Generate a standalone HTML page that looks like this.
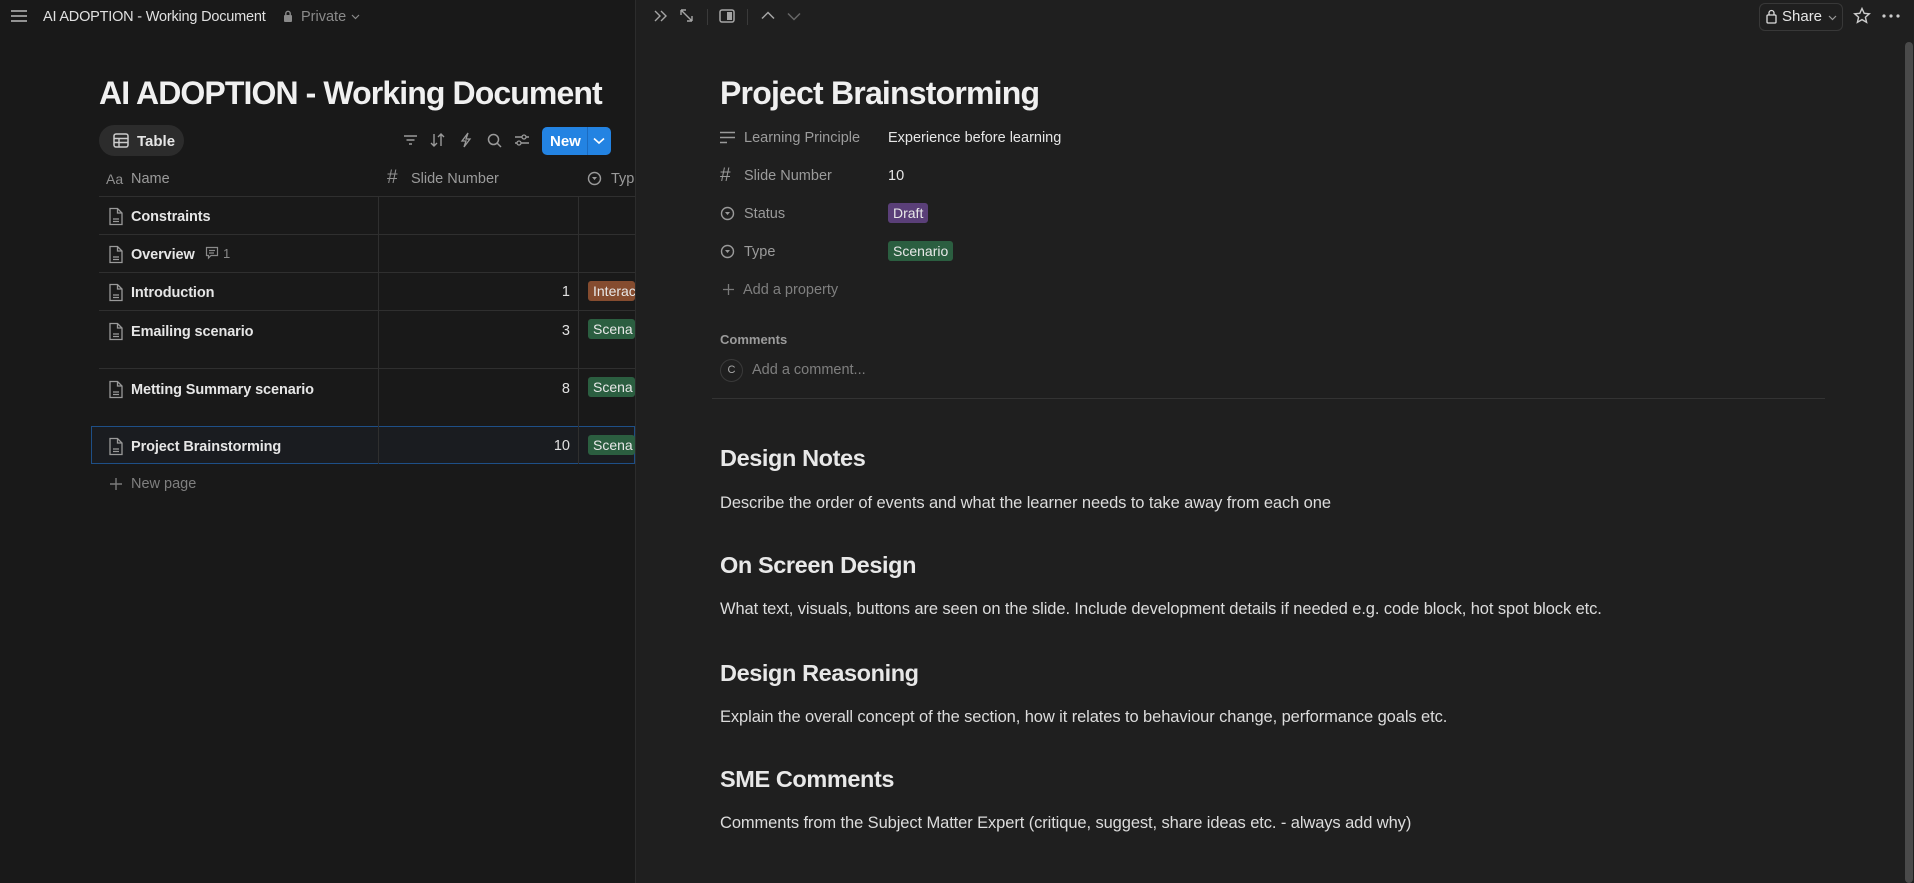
<!DOCTYPE html>
<html><head><meta charset="utf-8">
<style>
*{margin:0;padding:0;box-sizing:border-box}
body{width:1914px;height:883px;overflow:hidden;background:#191919;font-family:"Liberation Sans",sans-serif;color:#d4d4d4;position:relative}
.a{position:absolute;white-space:nowrap}
#left{position:absolute;left:0;top:0;width:635px;height:883px;background:#191919;overflow:hidden}
#right{position:absolute;left:635px;top:0;width:1279px;height:883px;background:#1f1f1f;border-left:1px solid #2c2c2c}
.nm{position:absolute;left:131px;font-size:14.5px;font-weight:bold;color:#e6e6e6;letter-spacing:-0.1px}
.num{position:absolute;font-size:14.5px;color:#e0e0e0;text-align:right;width:40px;left:530px}
.tag{position:absolute;left:588px;height:20px;border-radius:3px;font-size:14px;color:#e8e8e8;padding:2px 5px;overflow:hidden}
.vl{position:absolute;width:1px;background:#2f2f2f}
.doc{position:absolute;left:108px}
.lab{position:absolute;left:743px;font-size:14.5px;color:#9b9b9b}
.val{position:absolute;left:887px;font-size:14.5px;color:#e6e6e6}
h2{position:absolute;left:719px;font-size:23.5px;font-weight:bold;color:#e8e8e8;letter-spacing:-0.4px;white-space:nowrap}
.p{position:absolute;left:719px;font-size:16.5px;color:#dcdcdc;white-space:nowrap;letter-spacing:-0.1px}
</style></head><body>
<div id="left">
<svg class="a" style="left:10px;top:9px" width="18" height="14" viewBox="0 0 18 14"><path d="M1 2H17M1 7H17M1 12H17" stroke="#bbb" stroke-width="1.6"/></svg>
<div class="a" style="left:43px;top:9px;font-size:14.5px;color:#e0e0e0;letter-spacing:-0.2px">AI ADOPTION - Working Document</div>
<svg class="a" style="left:283px;top:10px" width="10" height="13" viewBox="0 0 10 13"><rect x="1" y="5" width="8" height="7" rx="1" fill="#8a8a8a"/><path d="M2.8 5V3.5a2.2 2.2 0 0 1 4.4 0V5" stroke="#8a8a8a" stroke-width="1.4" fill="none"/></svg>
<div class="a" style="left:301px;top:9px;font-size:14.5px;color:#8a8a8a">Private</div>
<svg class="a" style="left:351px;top:14px" width="9" height="6"><path d="M1 1L4.5 4.5L8 1" stroke="#8a8a8a" fill="none" stroke-width="1.2"/></svg>

<div class="a" style="left:99px;top:75px;font-size:32px;font-weight:bold;color:#f0f0f0;letter-spacing:-0.9px">AI ADOPTION - Working Document</div>

<div class="a" style="left:99px;top:125px;width:85px;height:31px;border-radius:16px;background:#2c2c2c"></div>
<svg class="a" style="left:113px;top:133px" width="16" height="15" viewBox="0 0 16 15"><rect x="1" y="1" width="14" height="13" rx="2" stroke="#ccc" stroke-width="1.5" fill="none"/><path d="M1 5.5H15M1 9.5H15M6 5.5V14" stroke="#ccc" stroke-width="1.4"/></svg>
<div class="a" style="left:137px;top:133px;font-size:15px;color:#e6e6e6;font-weight:bold">Table</div>

<svg class="a" style="left:403px;top:133px" width="15" height="14"><path d="M1 3H14M3.5 7H11.5M6 11H9" stroke="#9a9a9a" stroke-width="1.5"/></svg>
<svg class="a" style="left:430px;top:132px" width="15" height="16"><path d="M4 2V14M1 11L4 14L7 11M11 14V2M8 5L11 2L14 5" stroke="#9a9a9a" stroke-width="1.4" fill="none"/></svg>
<svg class="a" style="left:460px;top:132px" width="12" height="16"><path d="M8 1L2 9H6L4 15L10 7H6Z" stroke="#9a9a9a" stroke-width="1.3" fill="none"/></svg>
<svg class="a" style="left:487px;top:133px" width="15" height="15"><circle cx="6.5" cy="6.5" r="5" stroke="#9a9a9a" stroke-width="1.5" fill="none"/><path d="M10 10L14 14" stroke="#9a9a9a" stroke-width="1.5"/></svg>
<svg class="a" style="left:514px;top:133px" width="16" height="14"><path d="M1 4H15M1 10H15" stroke="#9a9a9a" stroke-width="1.4"/><circle cx="10" cy="4" r="2" fill="#191919" stroke="#9a9a9a" stroke-width="1.3"/><circle cx="5" cy="10" r="2" fill="#191919" stroke="#9a9a9a" stroke-width="1.3"/></svg>
<div class="a" style="left:542px;top:127px;width:69px;height:28px;border-radius:5px;background:#2383e2"></div>
<div class="a" style="left:587px;top:127px;width:1px;height:28px;background:#1b6bc0"></div>
<div class="a" style="left:550px;top:133px;font-size:15px;font-weight:bold;color:#fff">New</div>
<svg class="a" style="left:593px;top:137px" width="12" height="8"><path d="M1 1.5L6 6L11 1.5" stroke="#fff" stroke-width="1.6" fill="none"/></svg>

<div class="a" style="left:106px;top:171px;font-size:14px;color:#8f8f8f">Aa</div>
<div class="a" style="left:131px;top:171px;font-size:14.5px;color:#9b9b9b">Name</div>
<div class="a" style="left:387px;top:167px;font-size:19px;color:#8f8f8f">#</div>
<div class="a" style="left:411px;top:171px;font-size:14.5px;color:#9b9b9b">Slide Number</div>
<svg class="a" style="left:587px;top:171px" width="15" height="15"><circle cx="7.5" cy="7.5" r="6" stroke="#9a9a9a" stroke-width="1.4" fill="none"/><path d="M5 6H10L7.5 9Z" fill="#9a9a9a"/></svg>
<div class="a" style="left:611px;top:171px;font-size:14.5px;color:#9b9b9b">Typ</div>
<div class="a" style="left:99px;top:196px;width:536px;height:1px;background:#2f2f2f"></div>

<div class="a" style="left:99px;top:234px;width:536px;height:1px;background:#2f2f2f"></div>
<div class="a" style="left:99px;top:272px;width:536px;height:1px;background:#2f2f2f"></div>
<div class="a" style="left:99px;top:310px;width:536px;height:1px;background:#2f2f2f"></div>
<div class="a" style="left:99px;top:368px;width:536px;height:1px;background:#2f2f2f"></div>
<div class="a" style="left:91px;top:426px;width:544px;height:38px;border:1.5px solid #1e4f87;background:#1a1c20"></div>
<div class="vl" style="left:378px;top:196px;height:268px"></div>
<div class="vl" style="left:578px;top:196px;height:268px"></div>

<svg class="doc" style="top:207px" width="16" height="19" viewBox="0 0 16 19"><path d="M2 1.5H9.5L14 6V17.5H2Z M9.5 1.5V6H14 M5 12H11M5 14.5H11" stroke="#9a9a9a" stroke-width="1.3" fill="none"/></svg>
<div class="nm" style="top:209px">Constraints</div>
<svg class="doc" style="top:245px" width="16" height="19" viewBox="0 0 16 19"><path d="M2 1.5H9.5L14 6V17.5H2Z M9.5 1.5V6H14 M5 12H11M5 14.5H11" stroke="#9a9a9a" stroke-width="1.3" fill="none"/></svg>
<div class="nm" style="top:247px">Overview</div>
<svg class="a" style="left:205px;top:246px" width="14" height="14"><path d="M1.5 1.5H12.5V9.5H6L3.5 12V9.5H1.5Z M4 4.5H10M4 7H9" stroke="#8a8a8a" stroke-width="1.2" fill="none"/></svg>
<div class="a" style="left:223px;top:246px;font-size:13px;color:#8a8a8a">1</div>
<svg class="doc" style="top:283px" width="16" height="19" viewBox="0 0 16 19"><path d="M2 1.5H9.5L14 6V17.5H2Z M9.5 1.5V6H14 M5 12H11M5 14.5H11" stroke="#9a9a9a" stroke-width="1.3" fill="none"/></svg>
<div class="nm" style="top:285px">Introduction</div>
<div class="num" style="top:284px">1</div>
<div class="tag" style="top:281px;background:#854c2f;width:47px">Interac</div>
<svg class="doc" style="top:322px" width="16" height="19" viewBox="0 0 16 19"><path d="M2 1.5H9.5L14 6V17.5H2Z M9.5 1.5V6H14 M5 12H11M5 14.5H11" stroke="#9a9a9a" stroke-width="1.3" fill="none"/></svg>
<div class="nm" style="top:324px">Emailing scenario</div>
<div class="num" style="top:323px">3</div>
<div class="tag" style="top:319px;background:#2b5e40;width:47px">Scena</div>
<svg class="doc" style="top:380px" width="16" height="19" viewBox="0 0 16 19"><path d="M2 1.5H9.5L14 6V17.5H2Z M9.5 1.5V6H14 M5 12H11M5 14.5H11" stroke="#9a9a9a" stroke-width="1.3" fill="none"/></svg>
<div class="nm" style="top:382px">Metting Summary scenario</div>
<div class="num" style="top:381px">8</div>
<div class="tag" style="top:377px;background:#2b5e40;width:47px">Scena</div>
<svg class="doc" style="top:437px" width="16" height="19" viewBox="0 0 16 19"><path d="M2 1.5H9.5L14 6V17.5H2Z M9.5 1.5V6H14 M5 12H11M5 14.5H11" stroke="#9a9a9a" stroke-width="1.3" fill="none"/></svg>
<div class="nm" style="top:439px">Project Brainstorming</div>
<div class="num" style="top:438px">10</div>
<div class="tag" style="top:435px;background:#2b5e40;width:47px">Scena</div>

<svg class="a" style="left:110px;top:478px" width="12" height="12"><path d="M6 0V12M0 6H12" stroke="#7a7a7a" stroke-width="1.4"/></svg>
<div class="a" style="left:131px;top:476px;font-size:14.5px;color:#7f7f7f">New page</div>
</div>

<div id="right">
<svg class="a" style="left:17px;top:9px" width="15" height="14"><path d="M2 2L7 7L2 12M8 2L13 7L8 12" stroke="#a5a5a5" stroke-width="1.4" fill="none"/></svg>
<svg class="a" style="left:43px;top:8px" width="15" height="15"><path d="M2 2L13 13M2 2V7M2 2H7M13 13V8M13 13H8" stroke="#a5a5a5" stroke-width="1.4" fill="none"/></svg>
<div class="a" style="left:71px;top:9px;width:1px;height:16px;background:#3a3a3a"></div>
<svg class="a" style="left:83px;top:9px" width="16" height="14"><rect x="1" y="1" width="14" height="12" rx="2" stroke="#a5a5a5" stroke-width="1.5" fill="none"/><rect x="8" y="3" width="5" height="8" fill="#a5a5a5"/></svg>
<div class="a" style="left:111px;top:9px;width:1px;height:16px;background:#3a3a3a"></div>
<svg class="a" style="left:125px;top:11px" width="14" height="9"><path d="M1 7.5L7 1.5L13 7.5" stroke="#a5a5a5" stroke-width="1.5" fill="none"/></svg>
<svg class="a" style="left:151px;top:12px" width="14" height="9"><path d="M1 1.5L7 7.5L13 1.5" stroke="#666" stroke-width="1.5" fill="none"/></svg>

<div class="a" style="left:1123px;top:3px;width:84px;height:28px;border:1px solid #383838;border-radius:6px"></div>
<svg class="a" style="left:1130px;top:9px" width="11" height="15"><rect x="1" y="6" width="9" height="8" rx="1" stroke="#ddd" stroke-width="1.3" fill="none"/><path d="M3 6V4a2.5 2.5 0 0 1 5 0V6" stroke="#ddd" stroke-width="1.3" fill="none"/></svg>
<div class="a" style="left:1146px;top:8px;font-size:15px;color:#e6e6e6">Share</div>
<svg class="a" style="left:1192px;top:15px" width="9" height="6"><path d="M1 1L4.5 4.5L8 1" stroke="#999" fill="none" stroke-width="1.2"/></svg>
<svg class="a" style="left:1217px;top:7px" width="18" height="18" viewBox="0 0 18 18"><path d="M9 1.5L11.2 6.3L16.3 6.8L12.4 10.2L13.6 15.3L9 12.6L4.4 15.3L5.6 10.2L1.7 6.8L6.8 6.3Z" stroke="#ccc" stroke-width="1.4" fill="none"/></svg>
<svg class="a" style="left:1246px;top:14px" width="18" height="4"><circle cx="2" cy="2" r="1.6" fill="#ccc"/><circle cx="9" cy="2" r="1.6" fill="#ccc"/><circle cx="16" cy="2" r="1.6" fill="#ccc"/></svg>
<div class="a" style="left:1269px;top:42px;width:8px;height:841px;border-radius:4px;background:#4a4a4a"></div>

<div class="a" style="left:84px;top:75px;font-size:32px;font-weight:bold;color:#f0f0f0;letter-spacing:-0.8px">Project Brainstorming</div>

<svg class="a" style="left:84px;top:131px" width="15" height="13"><path d="M0 1.5H15M0 6.5H15M0 11.5H7" stroke="#9a9a9a" stroke-width="1.5"/></svg>
<div class="lab" style="left:108px;top:130px">Learning Principle</div>
<div class="val" style="left:252px;top:130px">Experience before learning</div>
<div class="a" style="left:84px;top:165px;font-size:19px;color:#9a9a9a">#</div>
<div class="lab" style="left:108px;top:168px">Slide Number</div>
<div class="val" style="left:252px;top:168px">10</div>
<svg class="a" style="left:84px;top:206px" width="15" height="15"><circle cx="7.5" cy="7.5" r="6" stroke="#9a9a9a" stroke-width="1.4" fill="none"/><path d="M5 6H10L7.5 9Z" fill="#9a9a9a"/></svg>
<div class="lab" style="left:108px;top:206px">Status</div>
<div class="tag" style="left:252px;top:203px;background:#5a3f78">Draft</div>
<svg class="a" style="left:84px;top:244px" width="15" height="15"><circle cx="7.5" cy="7.5" r="6" stroke="#9a9a9a" stroke-width="1.4" fill="none"/><path d="M5 6H10L7.5 9Z" fill="#9a9a9a"/></svg>
<div class="lab" style="left:108px;top:244px">Type</div>
<div class="tag" style="left:252px;top:241px;background:#2b5e40">Scenario</div>
<svg class="a" style="left:87px;top:284px" width="11" height="11"><path d="M5.5 0V11M0 5.5H11" stroke="#7a7a7a" stroke-width="1.3"/></svg>
<div class="lab" style="left:107px;top:282px;color:#7f7f7f">Add a property</div>

<div class="a" style="left:84px;top:332px;font-size:13px;color:#9b9b9b;font-weight:bold">Comments</div>
<div class="a" style="left:84px;top:359px;width:23px;height:23px;border-radius:50%;border:1px solid #3a3a3a;font-size:11px;color:#aaa;text-align:center;line-height:21px">C</div>
<div class="a" style="left:116px;top:362px;font-size:14.5px;color:#7f7f7f">Add a comment...</div>
<div class="a" style="left:76px;top:398px;width:1113px;height:1px;background:#333"></div>

<h2 style="left:84px;top:445px">Design Notes</h2>
<div class="p" style="left:84px;top:494px">Describe the order of events and what the learner needs to take away from each one</div>
<h2 style="left:84px;top:552px">On Screen Design</h2>
<div class="p" style="left:84px;top:600px">What text, visuals, buttons are seen on the slide. Include development details if needed e.g. code block, hot spot block etc.</div>
<h2 style="left:84px;top:660px">Design Reasoning</h2>
<div class="p" style="left:84px;top:708px">Explain the overall concept of the section, how it relates to behaviour change, performance goals etc.</div>
<h2 style="left:84px;top:766px">SME Comments</h2>
<div class="p" style="left:84px;top:814px">Comments from the Subject Matter Expert (critique, suggest, share ideas etc. - always add why)</div>
</div>
</body></html>
